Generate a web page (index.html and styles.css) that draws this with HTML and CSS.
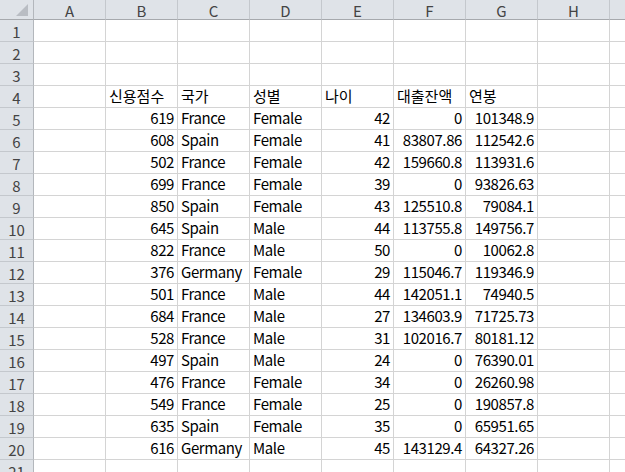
FILE: index.html
```html
<!DOCTYPE html>
<html lang="ko">
<head>
<meta charset="utf-8">
<link rel="stylesheet" href="styles.css">
</head>
<body>
<div class="sheet">
  <div class="corner"><svg class="tri" width="12" height="12" viewBox="0 0 12 12"><polygon points="12,0 12,12 0,12" fill="#b9bdc3"/></svg></div>
  <div class="ch">A</div><div class="ch">B</div><div class="ch">C</div><div class="ch">D</div><div class="ch">E</div><div class="ch">F</div><div class="ch">G</div><div class="ch">H</div><div class="ch end"></div>

  <div class="rh">1</div><div class="c"></div><div class="c"></div><div class="c"></div><div class="c"></div><div class="c"></div><div class="c"></div><div class="c"></div><div class="c"></div><div class="c end"></div>
  <div class="rh">2</div><div class="c"></div><div class="c"></div><div class="c"></div><div class="c"></div><div class="c"></div><div class="c"></div><div class="c"></div><div class="c"></div><div class="c end"></div>
  <div class="rh">3</div><div class="c"></div><div class="c"></div><div class="c"></div><div class="c"></div><div class="c"></div><div class="c"></div><div class="c"></div><div class="c"></div><div class="c end"></div>
  <div class="rh">4</div><div class="c"></div><div class="c k">신용점수</div><div class="c k">국가</div><div class="c k">성별</div><div class="c k">나이</div><div class="c k">대출잔액</div><div class="c k">연봉</div><div class="c"></div><div class="c end"></div>
  <div class="rh">5</div><div class="c"></div><div class="c n">619</div><div class="c">France</div><div class="c">Female</div><div class="c n">42</div><div class="c n">0</div><div class="c n">101348.9</div><div class="c"></div><div class="c end"></div>
  <div class="rh">6</div><div class="c"></div><div class="c n">608</div><div class="c">Spain</div><div class="c">Female</div><div class="c n">41</div><div class="c n">83807.86</div><div class="c n">112542.6</div><div class="c"></div><div class="c end"></div>
  <div class="rh">7</div><div class="c"></div><div class="c n">502</div><div class="c">France</div><div class="c">Female</div><div class="c n">42</div><div class="c n">159660.8</div><div class="c n">113931.6</div><div class="c"></div><div class="c end"></div>
  <div class="rh">8</div><div class="c"></div><div class="c n">699</div><div class="c">France</div><div class="c">Female</div><div class="c n">39</div><div class="c n">0</div><div class="c n">93826.63</div><div class="c"></div><div class="c end"></div>
  <div class="rh">9</div><div class="c"></div><div class="c n">850</div><div class="c">Spain</div><div class="c">Female</div><div class="c n">43</div><div class="c n">125510.8</div><div class="c n">79084.1</div><div class="c"></div><div class="c end"></div>
  <div class="rh">10</div><div class="c"></div><div class="c n">645</div><div class="c">Spain</div><div class="c">Male</div><div class="c n">44</div><div class="c n">113755.8</div><div class="c n">149756.7</div><div class="c"></div><div class="c end"></div>
  <div class="rh">11</div><div class="c"></div><div class="c n">822</div><div class="c">France</div><div class="c">Male</div><div class="c n">50</div><div class="c n">0</div><div class="c n">10062.8</div><div class="c"></div><div class="c end"></div>
  <div class="rh">12</div><div class="c"></div><div class="c n">376</div><div class="c">Germany</div><div class="c">Female</div><div class="c n">29</div><div class="c n">115046.7</div><div class="c n">119346.9</div><div class="c"></div><div class="c end"></div>
  <div class="rh">13</div><div class="c"></div><div class="c n">501</div><div class="c">France</div><div class="c">Male</div><div class="c n">44</div><div class="c n">142051.1</div><div class="c n">74940.5</div><div class="c"></div><div class="c end"></div>
  <div class="rh">14</div><div class="c"></div><div class="c n">684</div><div class="c">France</div><div class="c">Male</div><div class="c n">27</div><div class="c n">134603.9</div><div class="c n">71725.73</div><div class="c"></div><div class="c end"></div>
  <div class="rh">15</div><div class="c"></div><div class="c n">528</div><div class="c">France</div><div class="c">Male</div><div class="c n">31</div><div class="c n">102016.7</div><div class="c n">80181.12</div><div class="c"></div><div class="c end"></div>
  <div class="rh">16</div><div class="c"></div><div class="c n">497</div><div class="c">Spain</div><div class="c">Male</div><div class="c n">24</div><div class="c n">0</div><div class="c n">76390.01</div><div class="c"></div><div class="c end"></div>
  <div class="rh">17</div><div class="c"></div><div class="c n">476</div><div class="c">France</div><div class="c">Female</div><div class="c n">34</div><div class="c n">0</div><div class="c n">26260.98</div><div class="c"></div><div class="c end"></div>
  <div class="rh">18</div><div class="c"></div><div class="c n">549</div><div class="c">France</div><div class="c">Female</div><div class="c n">25</div><div class="c n">0</div><div class="c n">190857.8</div><div class="c"></div><div class="c end"></div>
  <div class="rh">19</div><div class="c"></div><div class="c n">635</div><div class="c">Spain</div><div class="c">Female</div><div class="c n">35</div><div class="c n">0</div><div class="c n">65951.65</div><div class="c"></div><div class="c end"></div>
  <div class="rh">20</div><div class="c"></div><div class="c n">616</div><div class="c">Germany</div><div class="c">Male</div><div class="c n">45</div><div class="c n">143129.4</div><div class="c n">64327.26</div><div class="c"></div><div class="c end"></div>
  <div class="rh">21</div><div class="c"></div><div class="c"></div><div class="c"></div><div class="c"></div><div class="c"></div><div class="c"></div><div class="c"></div><div class="c"></div><div class="c end"></div>
</div>
</body>
</html>
```
FILE: styles.css
```css
* { box-sizing: border-box; }
html, body {
  margin: 0;
  padding: 0;
  background: #ffffff;
  overflow: hidden;
}
.sheet {
  display: grid;
  grid-template-columns: 34px repeat(8, 72px) 1fr;
  grid-template-rows: 20px repeat(21, 22px);
  width: 625px;
  font-family: "Noto Sans CJK KR", "Noto Sans", sans-serif;
  font-size: 15px;
  color: #000;
}
.corner {
  position: relative;
  background: #dfe3e8;
  border-right: 1px solid #b3b7bc;
  border-bottom: 1px solid #a6a9ad;
}
.tri {
  position: absolute;
  right: 5px;
  bottom: 3px;
}
.ch {
  background: #dfe3e8;
  border-right: 1px solid #c4c8cd;
  border-bottom: 1px solid #a6a9ad;
  color: #444;
  display: flex;
  align-items: center;
  justify-content: center;
  line-height: 1;
  padding-top: 1px;
}
.rh {
  background: #dfe3e8;
  border-right: 1px solid #b3b7bc;
  border-bottom: 1px solid #c4c8cd;
  color: #444;
  display: flex;
  align-items: center;
  justify-content: center;
  line-height: 1;
  padding-top: 1px;
}
.c {
  border-right: 1px solid #d4d4d4;
  border-bottom: 1px solid #d4d4d4;
  display: flex;
  align-items: flex-end;
  padding: 0 3px 1px 3px;
  white-space: nowrap;
  overflow: visible;
  line-height: 20px;
  letter-spacing: -0.4px;
}
.k { letter-spacing: 0; }
.n { justify-content: flex-end; }
.end { border-right: none; }
```
